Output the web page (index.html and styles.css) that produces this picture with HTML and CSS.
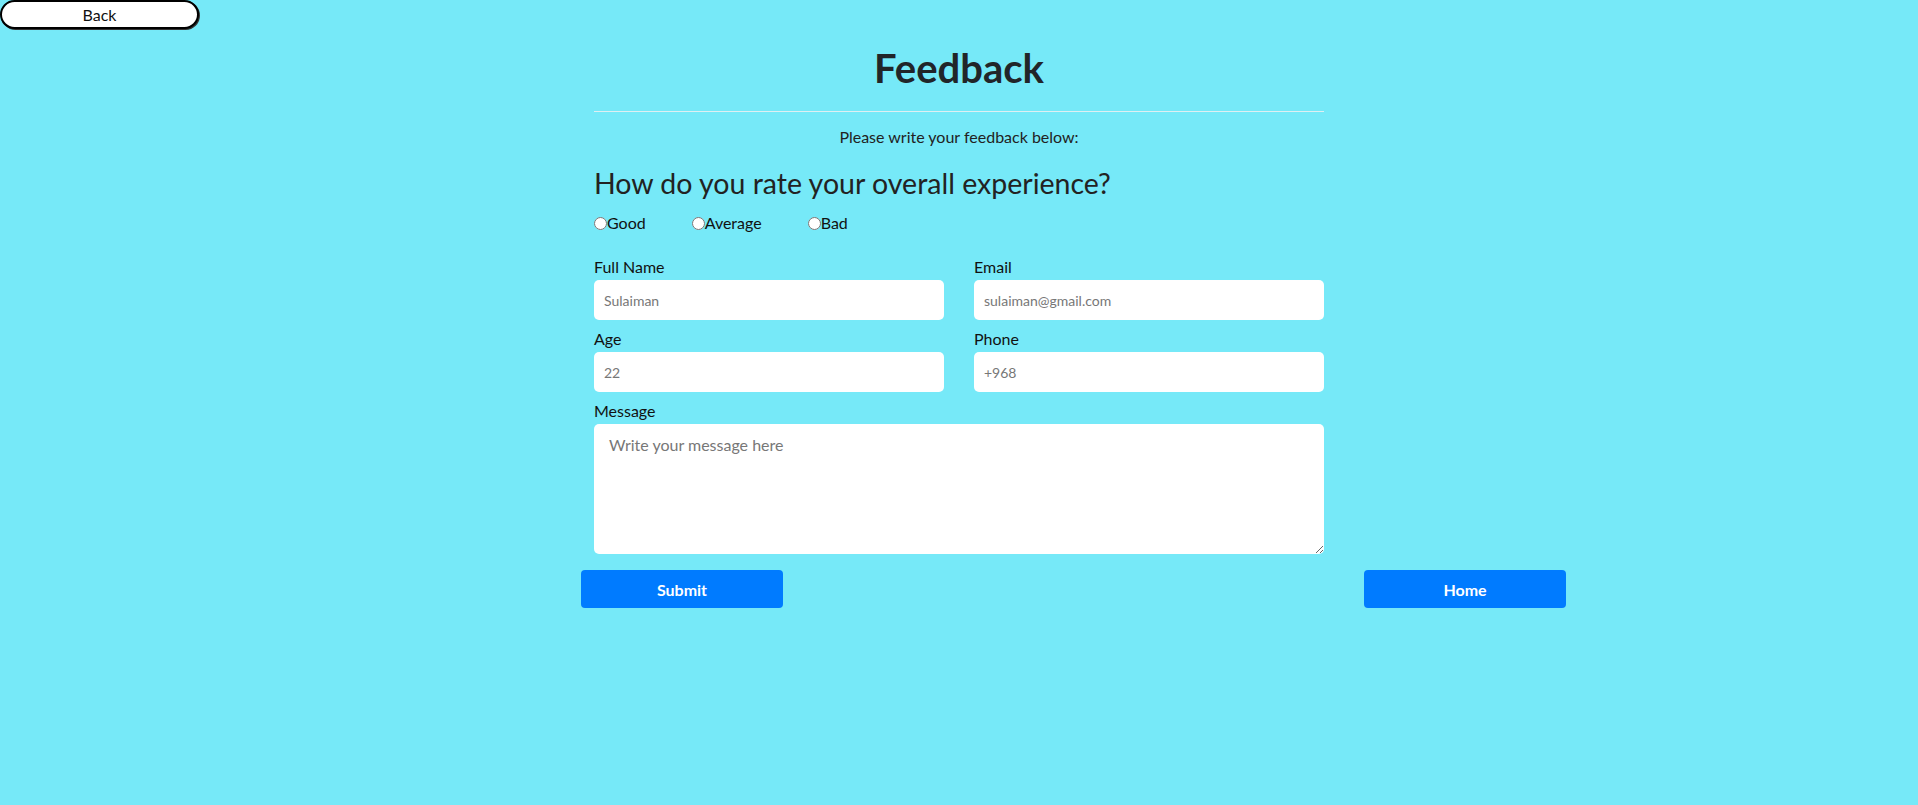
FILE: index.html
```html
<!DOCTYPE html>
<html lang="en">
<head>
<meta charset="utf-8">
<title>Feedback</title>
<link rel="stylesheet" href="styles.css">
</head>
<body>
<button class="back-btn" type="button">Back</button>
<main class="container">
  <h1 class="title">Feedback</h1>
  <hr class="divider">
  <p class="intro">Please write your feedback below:</p>
  <h2 class="question">How do you rate your overall experience?</h2>
  <div class="rating">
    <label class="rating-option"><input type="radio" name="rating" value="good">Good</label>
    <label class="rating-option"><input type="radio" name="rating" value="average">Average</label>
    <label class="rating-option"><input type="radio" name="rating" value="bad">Bad</label>
  </div>
  <form class="form">
    <div class="grid">
      <div class="field">
        <label class="field-label" for="name">Full Name</label>
        <input class="field-input" id="name" type="text" placeholder="Sulaiman">
      </div>
      <div class="field">
        <label class="field-label" for="email">Email</label>
        <input class="field-input" id="email" type="email" placeholder="sulaiman@gmail.com">
      </div>
      <div class="field">
        <label class="field-label" for="age">Age</label>
        <input class="field-input" id="age" type="text" placeholder="22">
      </div>
      <div class="field">
        <label class="field-label" for="phone">Phone</label>
        <input class="field-input" id="phone" type="text" placeholder="+968">
      </div>
      <div class="field field-wide">
        <label class="field-label" for="message">Message</label>
        <textarea class="field-textarea" id="message" placeholder="Write your message here"></textarea>
      </div>
    </div>
    <div class="actions">
      <button class="action-btn" type="submit">Submit</button>
      <button class="action-btn" type="button">Home</button>
    </div>
  </form>
</main>
</body>
</html>
```
FILE: styles.css
```css
html, body {
  margin: 0;
  padding: 0;
}
body {
  background: #76e9f8;
  font-family: "Lato", "Liberation Sans", sans-serif;
  color: #1a1a1a;
  min-height: 805px;
}
.back-btn {
  display: block;
  box-sizing: border-box;
  width: 199px;
  height: 29px;
  margin: 0;
  padding: 0;
  background: #fff;
  border: 2px solid #000;
  border-radius: 15px;
  font-family: inherit;
  font-size: 16px;
  color: #111;
  box-shadow: 1px 1px 0 #333;
}
.container {
  width: 730px;
  margin: 0 auto;
}
.title {
  margin: 15px 0 0;
  font-size: 40px;
  line-height: 48px;
  font-weight: 700;
  text-align: center;
  color: #212529;
}
.divider {
  margin: 19px 0 0;
  border: 0;
  border-top: 1px solid #dfeff2;
  height: 0;
}
.intro {
  margin: 16px 0 0;
  font-size: 16px;
  line-height: 18px;
  text-align: center;
  color: #222;
}
.question {
  margin: 22px 0 0;
  font-size: 28.5px;
  line-height: 31px;
  font-weight: 400;
  color: #222;
}
.rating {
  display: flex;
  margin-top: 14px;
  height: 20px;
}
.rating-option {
  display: inline-flex;
  align-items: center;
  font-size: 16px;
  line-height: 20px;
  margin-right: 46px;
  color: #111;
}
.rating-option input {
  margin: 0;
  width: 13px;
  height: 13px;
}
.form {
  margin-top: 24px;
}
.grid {
  display: grid;
  grid-template-columns: 1fr 1fr;
  column-gap: 30px;
  row-gap: 9px;
}
.field-wide {
  grid-column: 1 / -1;
}
.field-label {
  display: block;
  font-size: 16px;
  line-height: 20px;
  margin-bottom: 3px;
  color: #111;
}
.field-input,
.field-textarea {
  display: block;
  box-sizing: border-box;
  width: 100%;
  border: 0;
  border-radius: 5px;
  background: #fff;
  font-family: inherit;
  color: #333;
  outline: none;
}
.field-input {
  height: 40px;
  padding: 0 10px;
  font-size: 14px;
}
.field-textarea {
  height: 130px;
  padding: 11px 15px;
  font-size: 16px;
  resize: vertical;
}
.field-input::placeholder,
.field-textarea::placeholder {
  color: #777;
}
.actions {
  display: flex;
  justify-content: space-between;
  width: 985px;
  margin: 16px 0 0 -13px;
}
.action-btn {
  width: 202px;
  height: 38px;
  border: 0;
  border-radius: 4px;
  background: #007bff;
  color: #fff;
  font-family: inherit;
  font-size: 16px;
  font-weight: 700;
}
```
